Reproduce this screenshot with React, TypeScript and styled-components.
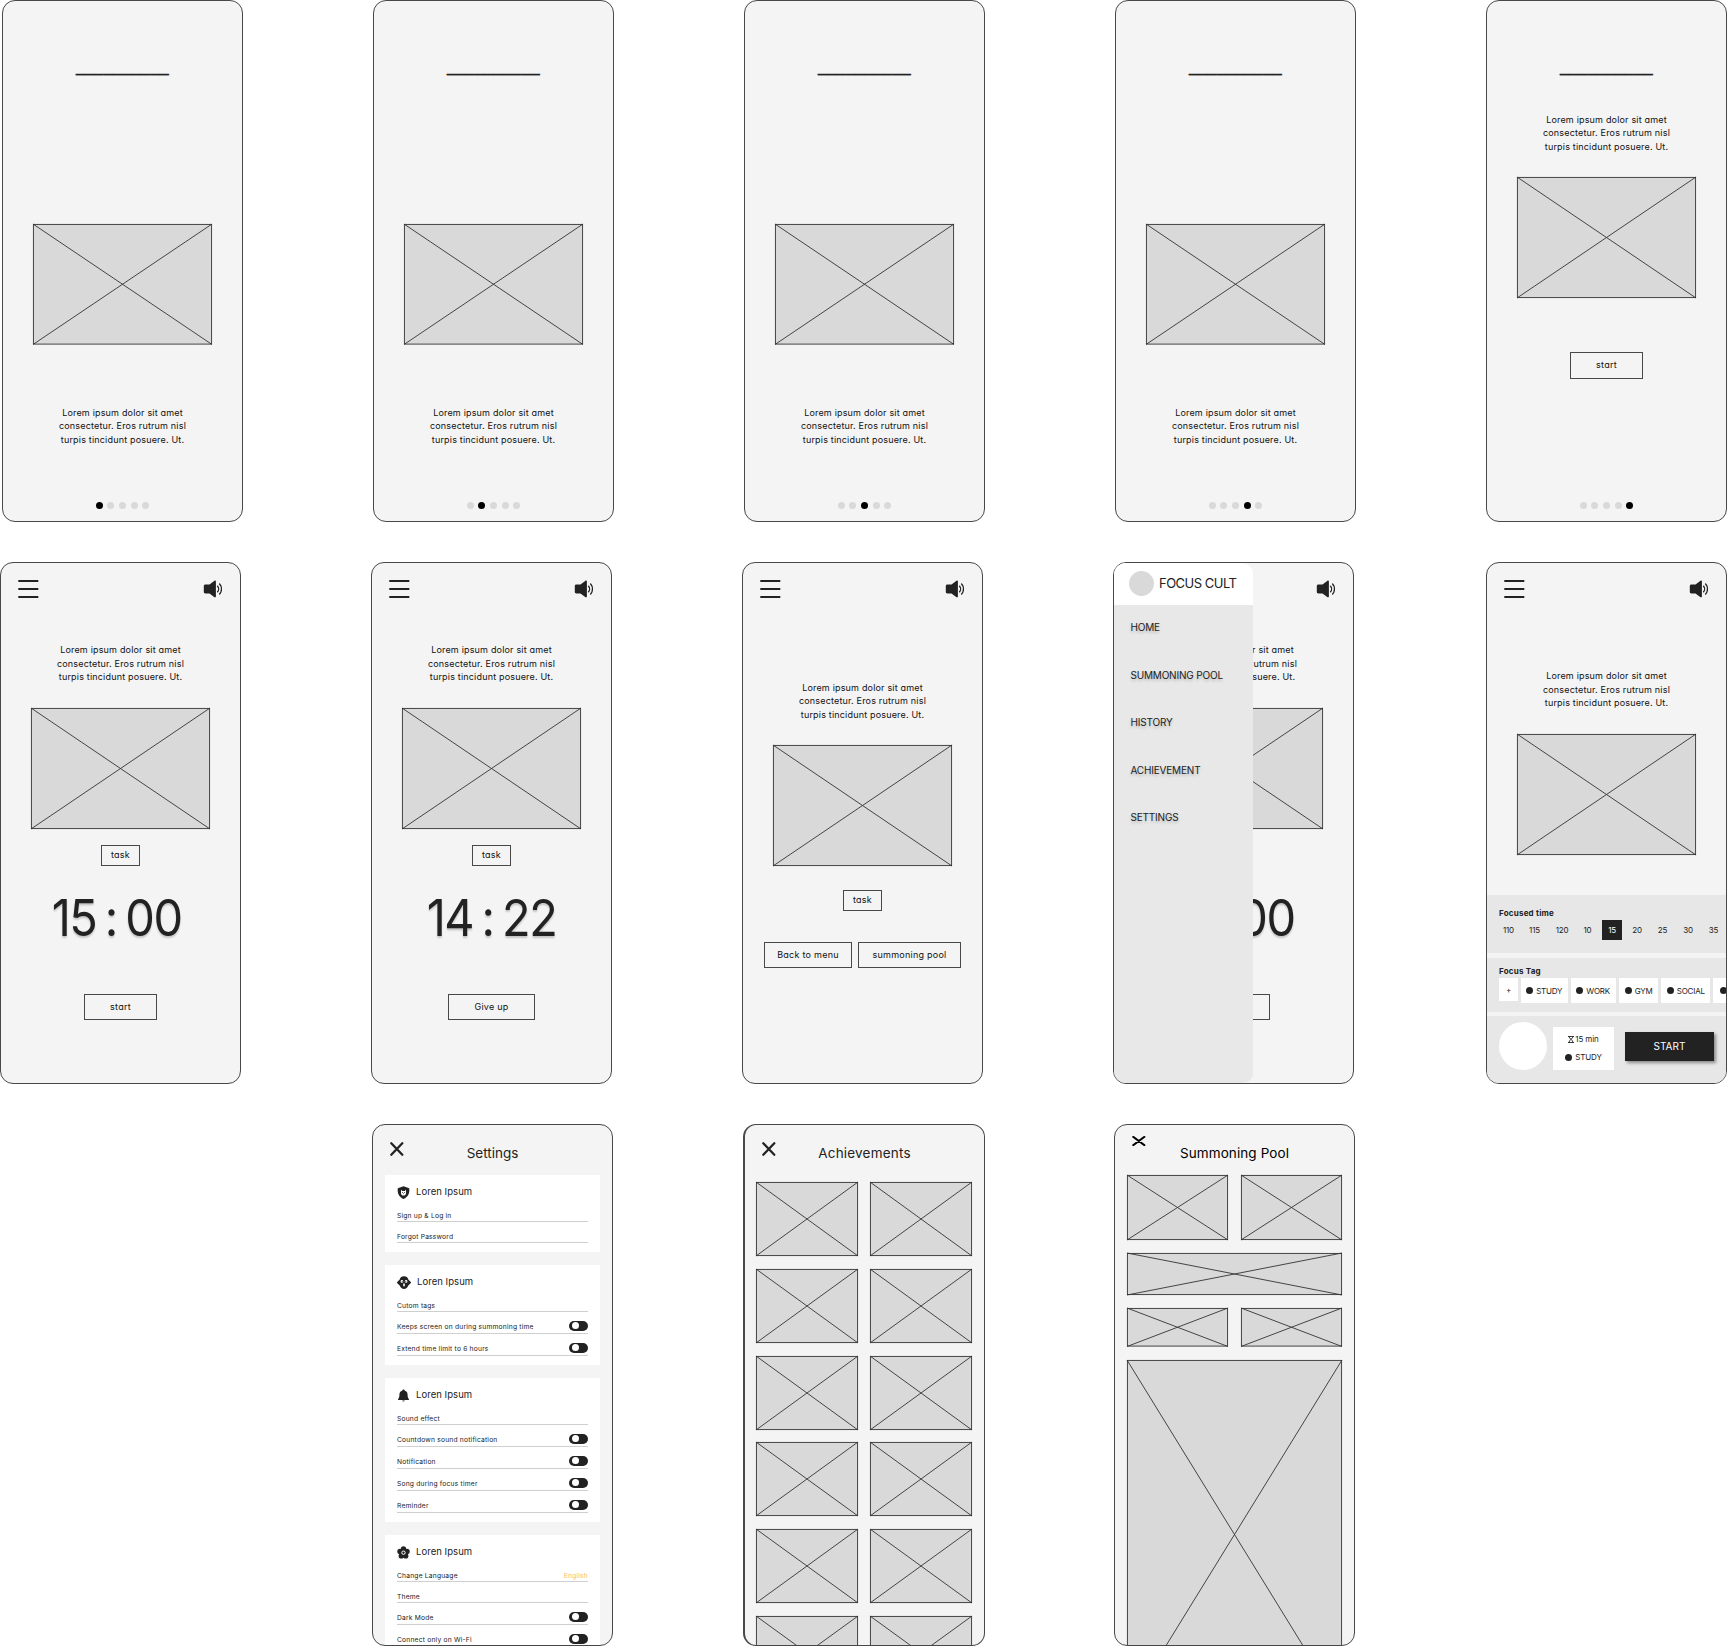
import React from "react";
import styled, { createGlobalStyle, css } from "styled-components";

const INK = "#222222";
const ROUND = `Inter, "Open Sans", "Liberation Sans", sans-serif`;

const GlobalStyle = createGlobalStyle`
  *, *::before, *::after { box-sizing: border-box; }
  html, body { margin: 0; padding: 0; background: #ffffff; }
  body { width: 1727px; height: 1646px; overflow: hidden; font-family: ${ROUND}; color: ${INK}; }
  svg { display: block; flex: none; }
`;

/* geometric look: single-storey "a" */
const geometric = css`
  font-family: ${ROUND};
  font-feature-settings: "cv11" 1, "calt" 0;
`;

const Board = styled.main`
  display: flex;
  flex-direction: column;
  gap: 40px;
  width: 1727px;
  height: 1646px;
  overflow: hidden;
`;

const BoardRow = styled.section<{ $indent: number }>`
  display: flex;
  gap: 130px;
  height: 522px;
  padding-left: ${(p) => p.$indent}px;
`;

const Phone = styled.article<{ $shift?: number; $thickLeft?: boolean }>`
  position: relative;
  flex: none;
  display: flex;
  flex-direction: column;
  align-items: center;
  width: ${(p) => (p.$thickLeft ? 242 : 241)}px;
  height: 522px;
  margin-left: ${(p) => p.$shift ?? 0}px;
  border: 1px solid #484848;
  border-left-width: ${(p) => (p.$thickLeft ? 2 : 1)}px;
  border-radius: 13px;
  background: #f4f4f4;
  overflow: hidden;
`;

const Blank = styled.h2`
  margin: 58px 0 0;
  height: 16px;
  font: 400 16px/16px "Liberation Sans", sans-serif;
  letter-spacing: 0.4px;
  -webkit-text-stroke: 0.4px ${INK};
  color: ${INK};
`;

const Copy = styled.p<{ $top: number }>`
  ${geometric}
  margin: ${(p) => p.$top}px 0 0;
  font-size: 9px;
  line-height: 13.5px;
  letter-spacing: 0.18px;
  text-align: center;
  white-space: pre-line;
  color: #111;
`;

const PictureFrame = styled.div<{ $top?: number; $w?: string; $h: number }>`
  flex: none;
  width: ${(p) => p.$w ?? "179px"};
  height: ${(p) => p.$h}px;
  margin-top: ${(p) => p.$top ?? 0}px;
`;

const Dots = styled.div<{ $top: number }>`
  display: flex;
  gap: 4.6px;
  margin-top: ${(p) => p.$top}px;
`;

const Dot = styled.span<{ $on: boolean }>`
  width: 7px;
  height: 7px;
  border-radius: 50%;
  background: ${(p) => (p.$on ? "#000" : "#d9d9d9")};
`;

const OutlineButton = styled.button<{ $top?: number; $w: number; $h?: number }>`
  ${geometric}
  flex: none;
  display: flex;
  align-items: center;
  justify-content: center;
  width: ${(p) => p.$w}px;
  height: ${(p) => p.$h ?? 26}px;
  margin: ${(p) => p.$top ?? 0}px 0 0;
  padding: 0 0 1px;
  border: 1px solid #484848;
  background: transparent;
  font-size: 9px;
  line-height: 12px;
  letter-spacing: 0.25px;
  white-space: nowrap;
  color: #111;
`;

const TopBar = styled.header`
  display: flex;
  justify-content: space-between;
  align-items: center;
  width: 100%;
  height: 36px;
  padding: 16px 18px 0 16px;
`;

const Clock = styled.div<{ $top: number; $nudge: number }>`
  ${geometric}
  display: flex;
  justify-content: center;
  gap: 9px;
  height: 52px;
  margin-top: ${(p) => p.$top}px;
  margin-left: ${(p) => p.$nudge}px;
  font-size: 51px;
  line-height: 52px;
  letter-spacing: -1.5px;
  color: ${INK};
  text-shadow: 0 2px 2px rgba(0, 0, 0, 0.2);
  transform: scaleX(0.92);
`;

const ButtonPair = styled.div`
  display: flex;
  gap: 6px;
  margin-top: 31px;
`;

const Drawer = styled.nav`
  position: absolute;
  top: 0;
  left: 0;
  width: 139px;
  height: 100%;
  border-radius: 0 10px 10px 0;
  background: #e8e8e8;
  overflow: hidden;
`;

const DrawerHead = styled.div`
  display: flex;
  align-items: center;
  gap: 5px;
  height: 42px;
  padding: 0 0 2px 15px;
  background: #ffffff;
`;

const Avatar = styled.span<{ $size: number; $white?: boolean }>`
  flex: none;
  width: ${(p) => p.$size}px;
  height: ${(p) => p.$size}px;
  border-radius: 50%;
  background: ${(p) => (p.$white ? "#ffffff" : "#d9d9d9")};
`;

const Brand = styled.span`
  ${geometric}
  font-size: 13px;
  line-height: 16px;
  letter-spacing: -0.5px;
  white-space: nowrap;
`;

const DrawerList = styled.ul`
  ${geometric}
  display: flex;
  flex-direction: column;
  gap: 33.6px;
  margin: 0;
  padding: 15px 0 0 16.4px;
  list-style: none;
  font-size: 10px;
  line-height: 14px;
  letter-spacing: -0.17px;
  text-shadow: 0 2px 3px rgba(0, 0, 0, 0.22);
`;

const Sheet = styled.div`
  display: flex;
  flex-direction: column;
  width: 100%;
  margin-top: 40px;
`;

const Panel = styled.section<{ $h: number; $gap?: number }>`
  flex: none;
  height: ${(p) => p.$h}px;
  margin-bottom: ${(p) => p.$gap ?? 0}px;
  padding-left: 12px;
  background: #e7e7e7;
  overflow: hidden;
`;

const PanelLabel = styled.h3<{ $top: number }>`
  margin: ${(p) => p.$top}px 0 0;
  font: 700 8px/10px ${ROUND};
  letter-spacing: 0.22px;
  white-space: nowrap;
`;

const Minutes = styled.div`
  ${geometric}
  display: grid;
  grid-template-columns: 19px 33px 22px 29px 20px 30px 21px 30px 21px;
  align-items: center;
  height: 20px;
  margin-top: 2px;
  font-size: 8px;
  text-align: center;
  letter-spacing: -0.2px;
`;

const Minute = styled.span<{ $on: boolean }>`
  line-height: 20px;
  color: ${(p) => (p.$on ? "#fff" : INK)};
  background: ${(p) => (p.$on ? INK : "transparent")};
`;

const Chips = styled.div`
  display: flex;
  gap: 3px;
  margin-top: 2px;
`;

const Chip = styled.span<{ $w: number; $h?: number }>`
  ${geometric}
  flex: none;
  display: flex;
  align-items: center;
  justify-content: center;
  gap: 3px;
  width: ${(p) => p.$w}px;
  height: ${(p) => p.$h ?? 25}px;
  background: #ffffff;
  font-size: 8px;
  line-height: 10px;
  letter-spacing: -0.22px;
  white-space: nowrap;
`;

const Bullet = styled.i`
  flex: none;
  width: 7px;
  height: 7px;
  border-radius: 50%;
  background: ${INK};
`;

const Summary = styled.div`
  display: flex;
  align-items: flex-start;
  padding-top: 6px;
`;

const SummaryCard = styled.div`
  ${geometric}
  display: flex;
  flex-direction: column;
  align-items: center;
  gap: 8px;
  width: 61px;
  height: 43px;
  margin: 5px 11px 0 6px;
  padding-top: 7px;
  background: #ffffff;
  font-size: 8px;
  line-height: 10px;
  letter-spacing: -0.1px;
`;

const SummaryLine = styled.span<{ $gap: number }>`
  display: flex;
  align-items: center;
  gap: ${(p) => p.$gap}px;
  white-space: nowrap;
`;

const StartButton = styled.button`
  ${geometric}
  width: 89px;
  height: 29px;
  margin: 10px 0 0;
  padding: 0;
  border: 0;
  background: ${INK};
  box-shadow: 2px 2px 3px rgba(0, 0, 0, 0.4);
  color: #ffffff;
  font-size: 10px;
  line-height: 29px;
`;

const PageHead = styled.header<{ $h: number }>`
  flex: none;
  display: grid;
  grid-template-columns: 40px 1fr 40px;
  width: 100%;
  height: ${(p) => p.$h}px;
`;

const CloseSlot = styled.span<{ $top: number }>`
  padding: ${(p) => p.$top}px 0 0 17px;
`;

const PageTitle = styled.h2<{ $dark?: boolean; $track?: number; $top?: number }>`
  ${geometric}
  margin: ${(p) => p.$top ?? 19}px 0 0;
  font-size: 13.5px;
  font-weight: 400;
  line-height: 18px;
  letter-spacing: ${(p) => p.$track ?? 0}px;
  text-align: center;
  white-space: nowrap;
  color: ${(p) => (p.$dark ? "#000" : INK)};
`;

const Groups = styled.div`
  display: flex;
  flex-direction: column;
  gap: 13px;
  width: 215px;
`;

const Group = styled.section`
  padding: 10px 12px 9px;
  background: #ffffff;
`;

const GroupHead = styled.h3`
  ${geometric}
  display: flex;
  align-items: center;
  gap: 6px;
  height: 14px;
  margin: 0 0 2px;
  font-size: 9.5px;
  font-weight: 400;
  line-height: 14px;
  letter-spacing: 0.05px;
`;

const Option = styled.div<{ $tall: boolean }>`
  display: flex;
  justify-content: space-between;
  align-items: flex-end;
  height: ${(p) => (p.$tall ? 22 : 21)}px;
  padding-bottom: ${(p) => (p.$tall ? 2 : 1.2)}px;
  border-bottom: 1px solid #cfcfcf;
  font-size: 6.7px;
  line-height: 8px;
  letter-spacing: 0.2px;
  white-space: nowrap;
`;

const Value = styled.span`
  color: #ffbd59;
`;

const Toggle = styled.span`
  display: flex;
  align-items: center;
  width: 19px;
  height: 10px;
  padding-left: 3px;
  border-radius: 5px;
  background: ${INK};

  &::before {
    content: "";
    width: 7px;
    height: 7px;
    margin-top: -1px;
    border-radius: 50%;
    background: #ffffff;
  }
`;

const TileGrid = styled.div`
  display: grid;
  grid-template-columns: 102px 102px;
  gap: 12.7px 12px;
  width: 216px;
  margin-right: 2px;
`;

const PoolStack = styled.div`
  display: flex;
  flex-direction: column;
  gap: 13px;
  width: 215px;
`;

const PoolPair = styled.div`
  display: grid;
  grid-template-columns: 1fr 1fr;
  gap: 13px;
`;

const Crossed = styled.svg`
  width: 100%;
  height: 100%;
  overflow: visible;
`;

function Picture({ top, w, h }: { top?: number; w?: string; h: number }) {
  return (
    <PictureFrame $top={top} $w={w} $h={h}>
      <Crossed fill="none" stroke="#333" strokeWidth="0.9">
        <rect x="0.4" y="0.4" width="calc(100% - 0.8px)" height="calc(100% - 0.8px)" fill="#d9d9d9" />
        <line x1="0" y1="0" x2="100%" y2="100%" />
        <line x1="100%" y1="0" x2="0" y2="100%" />
      </Crossed>
    </PictureFrame>
  );
}

const MenuIcon = () => (
  <svg width="22" height="20" viewBox="0 0 22 20" stroke={INK} strokeWidth="1.9" strokeLinecap="round">
    <path d="M2 2H20.600M2 10H20.600M2 18H20.600" />
  </svg>
);

const SpeakerIcon = () => (
  <svg width="19" height="18" viewBox="0 0 19 18" fill={INK}>
    <path d="M2.500 4.600h4L11.200.9c.9-.7 1.700-.3 1.700.8v14.600c0 1.100-.8 1.500-1.700.8L6.500 13.400h-4c-1.100 0-1.700-.6-1.700-1.700V6.300c0-1.100.6-1.700 1.700-1.700Z" />
    <path d="M14.600 6.200c1.300 1.500 1.300 4.100 0 5.600M16.600 4c2.500 2.600 2.500 7.400 0 10" fill="none" stroke={INK} strokeWidth="1.300" strokeLinecap="round" />
  </svg>
);

const CloseIcon = ({ h = 14, color = INK }: { h?: number; color?: string }) => (
  <svg width="14" height={h} viewBox="0 0 14 14" preserveAspectRatio="none" stroke={color} strokeWidth="2.300" strokeLinecap="round">
    <path d="M1.300 1.300 12.300 12.700M12.300 1.300 1.300 12.700" />
  </svg>
);

const HourglassIcon = () => (
  <svg width="6" height="7" viewBox="0 0 6 7" fill="none" stroke={INK} strokeWidth="0.9">
    <path d="M0 .5H6M0 6.500H6M1 .5C1 2.500 5 4 5 6.500M5 .5C5 2.500 1 4 1 6.500" />
  </svg>
);

const ShieldIcon = () => (
  <svg width="13" height="13" viewBox="0 0 13 13" fill={INK}>
    <path d="M6.500.2 12.200 2.200C12.900 6.800 11.200 11 6.500 12.900 1.800 11 .1 6.800.8 2.200Z" />
    <path d="M4 3.700 5.300 5h2.400L9 3.700v3.500C9 8.700 7.900 9.600 6.500 9.600S4 8.700 4 7.200Z" fill="#fff" />
    <path d="M5.500 6v1M7.500 6v1M6.500 7.400v.8" stroke={INK} strokeWidth=".7" />
  </svg>
);

const CreatureIcon = () => (
  <svg width="14" height="13" viewBox="0 0 14 13" fill={INK}>
    <path d="M7 .2c2.300 0 3.700 1.200 4.300 3.200L13.800 6c.3.400.2.800-.1 1.200l-2.400 2.300C10.400 11.600 9 12.900 7 12.900s-3.400-1.300-4.300-3.400L.3 7.200C0 6.800-.1 6.400.2 6l2.500-2.600C3.300 1.400 4.700.2 7 .2Z" />
    <circle cx="4.900" cy="5.400" r="1.300" fill="#fff" />
    <circle cx="9.100" cy="5.400" r="1.300" fill="#fff" />
    <circle cx="5.200" cy="5.500" r=".5" />
    <circle cx="8.800" cy="5.500" r=".5" />
    <path d="M6.200 7.600h1.600v2.200L7 10.700l-.8-.9Z" fill="#fff" />
  </svg>
);

const BellIcon = () => (
  <svg width="13" height="13" viewBox="0 0 13 13" fill={INK}>
    <path d="M6.500.5c.7 0 1 .4 1.100 1C9.700 2.100 10.600 3.700 10.600 5.800c0 2.300.4 3.200 1.300 4.200v.9H1.100V10c.9-1 1.300-1.900 1.300-4.200 0-2.100.9-3.700 3-4.300.1-.6.4-1 1.100-1Z" />
    <path d="M5.200 11.400h2.600c-.2.700-.6 1-1.300 1s-1.100-.3-1.300-1Z" />
  </svg>
);

const FlowerIcon = () => (
  <svg width="13" height="13" viewBox="0 0 13 13" fill={INK}>
    <circle cx="6.500" cy="3" r="2.700" />
    <circle cx="3" cy="5.500" r="2.700" />
    <circle cx="10" cy="5.500" r="2.700" />
    <circle cx="4.300" cy="9.900" r="2.700" />
    <circle cx="8.700" cy="9.900" r="2.700" />
    <circle cx="6.500" cy="6.700" r="3" />
    <circle cx="6.500" cy="6.700" r="1.700" fill="none" stroke="#fff" strokeWidth="1" />
  </svg>
);

const LOREM = "Lorem ipsum dolor sit amet\nconsectetur. Eros rutrum nisl\nturpis tincidunt posuere. Ut.";

function Pager({ active, top }: { active: number; top: number }) {
  return (
    <Dots $top={top}>
      {[0, 1, 2, 3, 4].map((i) => (
        <Dot key={i} $on={i === active} />
      ))}
    </Dots>
  );
}

function Bar() {
  return (
    <TopBar>
      <MenuIcon />
      <SpeakerIcon />
    </TopBar>
  );
}

function IntroPhone({ step }: { step: number }) {
  return (
    <Phone>
      <Blank>__________</Blank>
      <Picture top={148.5} h={120.5} />
      <Copy $top={61.5}>{LOREM}</Copy>
      <Pager active={step} top={56} />
    </Phone>
  );
}

function LastIntroPhone() {
  return (
    <Phone>
      <Blank>__________</Blank>
      <Copy $top={37.5}>{LOREM}</Copy>
      <Picture top={24} h={121} />
      <OutlineButton $top={54} $w={73} $h={27}>start</OutlineButton>
      <Pager active={4} top={123} />
    </Phone>
  );
}

type TimerProps = { left: string; right: string; action: string; width: number; nudge: number; drawer?: boolean };

function TimerPhone({ left, right, action, width, nudge, drawer }: TimerProps) {
  return (
    <Phone>
      <Bar />
      <Copy $top={44}>{LOREM}</Copy>
      <Picture top={24.5} h={121} />
      <OutlineButton $top={16} $w={39} $h={21}>task</OutlineButton>
      <Clock $top={26} $nudge={nudge}>
        <span>{left}</span>
        <span>:</span>
        <span>{right}</span>
      </Clock>
      <OutlineButton $top={50} $w={width}>{action}</OutlineButton>
      {drawer && (
        <Drawer>
          <DrawerHead>
            <Avatar $size={25} />
            <Brand>FOCUS CULT</Brand>
          </DrawerHead>
          <DrawerList>
            {["HOME", "SUMMONING POOL", "HISTORY", "ACHIEVEMENT", "SETTINGS"].map((item) => (
              <li key={item}>{item}</li>
            ))}
          </DrawerList>
        </Drawer>
      )}
    </Phone>
  );
}

function DonePhone() {
  return (
    <Phone>
      <Bar />
      <Copy $top={81.5}>{LOREM}</Copy>
      <Picture top={24} h={121} />
      <OutlineButton $top={24} $w={39} $h={21}>task</OutlineButton>
      <ButtonPair>
        <OutlineButton $w={88}>Back to menu</OutlineButton>
        <OutlineButton $w={103}>summoning pool</OutlineButton>
      </ButtonPair>
    </Phone>
  );
}

const TAGS: [string, number][] = [["STUDY", 46.5], ["WORK", 45.3], ["GYM", 39.5], ["SOCIAL", 49]];

function SetupPhone() {
  return (
    <Phone $shift={2}>
      <Bar />
      <Copy $top={70}>{LOREM}</Copy>
      <Picture top={24.5} h={121} />
      <Sheet>
        <Panel $h={58} $gap={5}>
          <PanelLabel $top={13}>Focused time</PanelLabel>
          <Minutes>
            {["110", "115", "120", "10", "15", "20", "25", "30", "35"].map((m) => (
              <Minute key={m} $on={m === "15"}>{m}</Minute>
            ))}
          </Minutes>
        </Panel>
        <Panel $h={54} $gap={4}>
          <PanelLabel $top={8}>Focus Tag</PanelLabel>
          <Chips>
            <Chip $w={19} $h={23}>+</Chip>
            {TAGS.map(([tag, w]) => (
              <Chip key={tag} $w={w}>
                <Bullet />
                {tag}
              </Chip>
            ))}
            <Chip $w={20}>
              <Bullet />
            </Chip>
          </Chips>
        </Panel>
        <Panel $h={72}>
          <Summary>
            <Avatar $size={48} $white />
            <SummaryCard>
              <SummaryLine $gap={1}>
                <HourglassIcon />
                15 min
              </SummaryLine>
              <SummaryLine $gap={3}>
                <Bullet />
                STUDY
              </SummaryLine>
            </SummaryCard>
            <StartButton>START</StartButton>
          </Summary>
        </Panel>
      </Sheet>
    </Phone>
  );
}

type Item = { label: string; toggle?: boolean; value?: string };
const GROUPS: { icon: React.ReactNode; items: Item[] }[] = [
  { icon: <ShieldIcon />, items: [{ label: "Sign up & Log in" }, { label: "Forgot Password" }] },
  {
    icon: <CreatureIcon />,
    items: [
      { label: "Cutom tags" },
      { label: "Keeps screen on during summoning time", toggle: true },
      { label: "Extend time limit to 6 hours", toggle: true },
    ],
  },
  {
    icon: <BellIcon />,
    items: [
      { label: "Sound effect" },
      { label: "Countdown sound notification", toggle: true },
      { label: "Notification", toggle: true },
      { label: "Song during focus timer", toggle: true },
      { label: "Reminder", toggle: true },
    ],
  },
  {
    icon: <FlowerIcon />,
    items: [
      { label: "Change Language", value: "English" },
      { label: "Theme" },
      { label: "Dark Mode", toggle: true },
      { label: "Connect only on Wi-Fi", toggle: true },
    ],
  },
];

function SettingsPhone() {
  return (
    <Phone>
      <PageHead $h={50}>
        <CloseSlot $top={17}><CloseIcon /></CloseSlot>
        <PageTitle>Settings</PageTitle>
      </PageHead>
      <Groups>
        {GROUPS.map((group, g) => (
          <Group key={g}>
            <GroupHead>
              {group.icon}
              Loren Ipsum
            </GroupHead>
            {group.items.map((item) => (
              <Option key={item.label} $tall={!!item.toggle}>
                {item.label}
                {item.toggle && <Toggle />}
                {item.value && <Value>{item.value}</Value>}
              </Option>
            ))}
          </Group>
        ))}
      </Groups>
    </Phone>
  );
}

function AchievementsPhone() {
  return (
    <Phone $thickLeft>
      <PageHead $h={57.3}>
        <CloseSlot $top={17}><CloseIcon /></CloseSlot>
        <PageTitle $track={0.2}>Achievements</PageTitle>
      </PageHead>
      <TileGrid>
        {Array.from({ length: 12 }, (_, i) => (
          <Picture key={i} w="100%" h={74} />
        ))}
      </TileGrid>
    </Phone>
  );
}

function PoolPhone() {
  return (
    <Phone $shift={-1}>
      <PageHead $h={50}>
        <CloseSlot $top={11}><CloseIcon h={10} color="#000" /></CloseSlot>
        <PageTitle $dark $track={0.1}>Summoning Pool</PageTitle>
      </PageHead>
      <PoolStack>
        <PoolPair>
          <Picture w="100%" h={65} />
          <Picture w="100%" h={65} />
        </PoolPair>
        <Picture w="100%" h={42} />
        <PoolPair>
          <Picture w="100%" h={38.5} />
          <Picture w="100%" h={38.5} />
        </PoolPair>
        <Picture w="100%" h={349} />
      </PoolStack>
    </Phone>
  );
}

export default function App() {
  return (
    <>
      <GlobalStyle />
      <Board>
        <BoardRow $indent={2}>
          <IntroPhone step={0} />
          <IntroPhone step={1} />
          <IntroPhone step={2} />
          <IntroPhone step={3} />
          <LastIntroPhone />
        </BoardRow>
        <BoardRow $indent={0}>
          <TimerPhone left="15" right="00" action="start" width={73} nudge={-8} />
          <TimerPhone left="14" right="22" action="Give up" width={87} nudge={1} />
          <DonePhone />
          <TimerPhone left="15" right="00" action="start" width={73} nudge={-8} drawer />
          <SetupPhone />
        </BoardRow>
        <BoardRow $indent={372}>
          <SettingsPhone />
          <AchievementsPhone />
          <PoolPhone />
        </BoardRow>
      </Board>
    </>
  );
}
